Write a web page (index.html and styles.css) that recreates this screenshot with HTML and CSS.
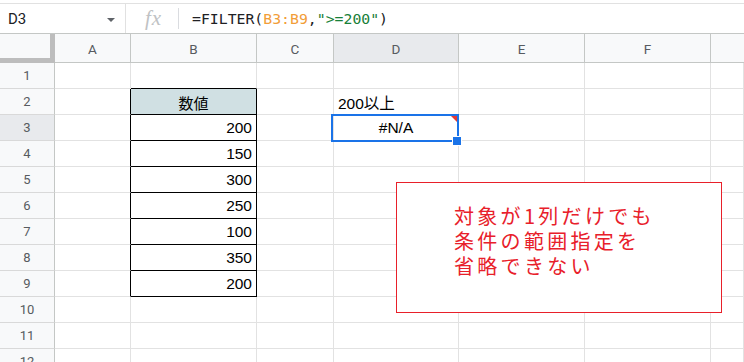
FILE: index.html
```html
<!DOCTYPE html>
<html lang="ja">
<head>
<meta charset="utf-8">
<link rel="stylesheet" href="styles.css">
</head>
<body>
<div class="topgap"></div>
<div class="fbar">
  <div class="namebox"><span class="ref">D3</span><span class="caret"></span></div>
  <div class="fx"><span>fx</span></div>
  <div class="formula">=FILTER(<span class="rng">B3:B9</span>,<span class="str">"&gt;=200"</span>)</div>
</div>
<div class="sheet">
  <div class="corner"></div><div class="ch">A</div><div class="ch">B</div><div class="ch">C</div><div class="ch sel">D</div><div class="ch">E</div><div class="ch">F</div><div class="ch last"></div>

  <div class="rh">1</div><div class="c"></div><div class="c bb"></div><div class="c"></div><div class="c"></div><div class="c"></div><div class="c"></div><div class="c"></div>
  <div class="rh">2</div><div class="c br"></div><div class="c tb head">数値</div><div class="c"></div><div class="c txt">200以上</div><div class="c"></div><div class="c"></div><div class="c"></div>
  <div class="rh sel">3</div><div class="c br"></div><div class="c tb num">200</div><div class="c"></div><div class="c ctr">#N/A</div><div class="c"></div><div class="c"></div><div class="c"></div>
  <div class="rh">4</div><div class="c br"></div><div class="c tb num">150</div><div class="c"></div><div class="c"></div><div class="c"></div><div class="c"></div><div class="c"></div>
  <div class="rh">5</div><div class="c br"></div><div class="c tb num">300</div><div class="c"></div><div class="c"></div><div class="c"></div><div class="c"></div><div class="c"></div>
  <div class="rh">6</div><div class="c br"></div><div class="c tb num">250</div><div class="c"></div><div class="c"></div><div class="c"></div><div class="c"></div><div class="c"></div>
  <div class="rh">7</div><div class="c br"></div><div class="c tb num">100</div><div class="c"></div><div class="c"></div><div class="c"></div><div class="c"></div><div class="c"></div>
  <div class="rh">8</div><div class="c br"></div><div class="c tb num">350</div><div class="c"></div><div class="c"></div><div class="c"></div><div class="c"></div><div class="c"></div>
  <div class="rh">9</div><div class="c br"></div><div class="c tb num">200</div><div class="c"></div><div class="c"></div><div class="c"></div><div class="c"></div><div class="c"></div>
  <div class="rh">10</div><div class="c"></div><div class="c"></div><div class="c"></div><div class="c"></div><div class="c"></div><div class="c"></div><div class="c"></div>
  <div class="rh">11</div><div class="c"></div><div class="c"></div><div class="c"></div><div class="c"></div><div class="c"></div><div class="c"></div><div class="c"></div>
  <div class="rh">12</div><div class="c"></div><div class="c"></div><div class="c"></div><div class="c"></div><div class="c"></div><div class="c"></div><div class="c"></div>

  <div class="selection"><span class="errtri"></span><span class="handle"></span></div>
  <div class="note">
    <div class="line">対象が1列だけでも</div>
    <div class="line">条件の範囲指定を</div>
    <div class="line">省略できない</div>
  </div>
</div>
</body>
</html>
```
FILE: styles.css
```css
html, body {
  margin: 0;
  padding: 0;
  background: #fff;
  overflow: hidden;
  width: 744px;
  height: 362px;
}
body {
  font-family: "Liberation Sans", Arial, "Noto Sans CJK JP", sans-serif;
}
.topgap {
  height: 3px;
}
.fbar {
  display: flex;
  align-items: stretch;
  height: 29px;
  border-top: 1px solid #e1e1e1;
  border-bottom: 1px solid #c4c7c5;
}
.namebox {
  width: 126px;
  border-right: 1px solid #e1e1e1;
  display: flex;
  align-items: center;
  justify-content: space-between;
  padding: 0 10px 0 8px;
  box-sizing: border-box;
}
.ref {
  font-family: Roboto, "Liberation Sans", sans-serif;
  font-size: 15px;
  color: #202124;
  padding-top: 1px;
}
.caret {
  width: 0;
  height: 0;
  border-left: 4px solid transparent;
  border-right: 4px solid transparent;
  border-top: 4px solid #5f6368;
  margin-top: 2px;
}
.fx {
  width: 53px;
  display: flex;
  align-items: center;
  justify-content: center;
  position: relative;
}
.fx::after {
  content: "";
  position: absolute;
  right: 0;
  top: 4px;
  bottom: 4px;
  width: 1px;
  background: #dadce0;
}
.fx span {
  font-family: "Liberation Serif", "DejaVu Serif", serif;
  font-style: italic;
  font-size: 21px;
  color: #c0c2c4;
  letter-spacing: 1px;
  margin-left: 2px;
}
.formula {
  padding-left: 13px;
  display: flex;
  align-items: center;
  font-family: "DejaVu Sans Mono", "Liberation Mono", monospace;
  font-size: 14.8px;
  color: #202124;
  white-space: pre;
}
.rng { color: #f29d38; }
.str { color: #188038; }

.sheet {
  position: relative;
  display: grid;
  grid-template-columns: 55px 76px 126px 77px 125px 126px 126px 1fr;
  grid-template-rows: 29px repeat(12, 26px);
}
.corner {
  background: #f8f9fa;
  border-right: 5px solid #bdbdbd;
  border-bottom: 5px solid #bdbdbd;
  box-sizing: border-box;
  width: 55px;
}
.ch {
  background: #f8f9fa;
  border-right: 1px solid #c4c7c5;
  border-bottom: 1px solid #c4c7c5;
  display: flex;
  align-items: center;
  justify-content: center;
  font-family: Roboto, "Liberation Sans", sans-serif;
  font-size: 13.5px;
  color: #575b60;
  padding-top: 1px;
  box-sizing: border-box;
}
.ch.sel, .rh.sel {
  background: #e8eaed;
}
.ch.last {
  border-right: none;
}
.rh {
  background: #f8f9fa;
  border-right: 1px solid #c4c7c5;
  border-bottom: 1px solid #d9d9d9;
  display: flex;
  align-items: center;
  justify-content: center;
  font-family: Roboto, "Liberation Sans", sans-serif;
  font-size: 13px;
  color: #575b60;
  box-sizing: border-box;
}
.c {
  border-right: 1px solid #e2e2e2;
  border-bottom: 1px solid #e2e2e2;
  box-sizing: border-box;
  display: flex;
  align-items: center;
  font-size: 15.5px;
  color: #000;
  padding: 1px 4px 0;
  min-width: 0;
}
.c.bb { border-bottom-color: #000; }
.c.br { border-right-color: #000; }
.c.tb {
  border-right-color: #000;
  border-bottom-color: #000;
}
.c.head {
  background: #d0e0e3;
  justify-content: center;
  font-family: "Noto Sans CJK JP", sans-serif;
  font-size: 15px;
}
.c.num { justify-content: flex-end; }
.c.txt {
  font-family: "Liberation Sans", "Noto Sans CJK JP", sans-serif;
}
.c.ctr { justify-content: center; }

.selection {
  position: absolute;
  left: 331px;
  top: 80px;
  width: 128px;
  height: 28px;
  border: 2px solid #1a73e8;
  box-sizing: border-box;
}
.errtri {
  position: absolute;
  right: 0;
  top: 0;
  width: 0;
  height: 0;
  border-top: 6px solid #e53935;
  border-left: 6px solid transparent;
}
.handle {
  position: absolute;
  right: -5px;
  bottom: -6px;
  width: 8px;
  height: 8px;
  background: #1a73e8;
  border: 1px solid #fff;
}
.note {
  position: absolute;
  left: 396px;
  top: 148px;
  width: 326px;
  height: 131px;
  box-sizing: border-box;
  border: 1px solid #e8202a;
  background: #fff;
  color: #e8202a;
  font-family: "Noto Sans CJK JP", sans-serif;
  font-size: 20px;
  letter-spacing: 3.3px;
  padding: 20px 0 0 57px;
  display: flex;
  flex-direction: column;
}
.line {
  height: 25px;
  line-height: 25px;
}
```
